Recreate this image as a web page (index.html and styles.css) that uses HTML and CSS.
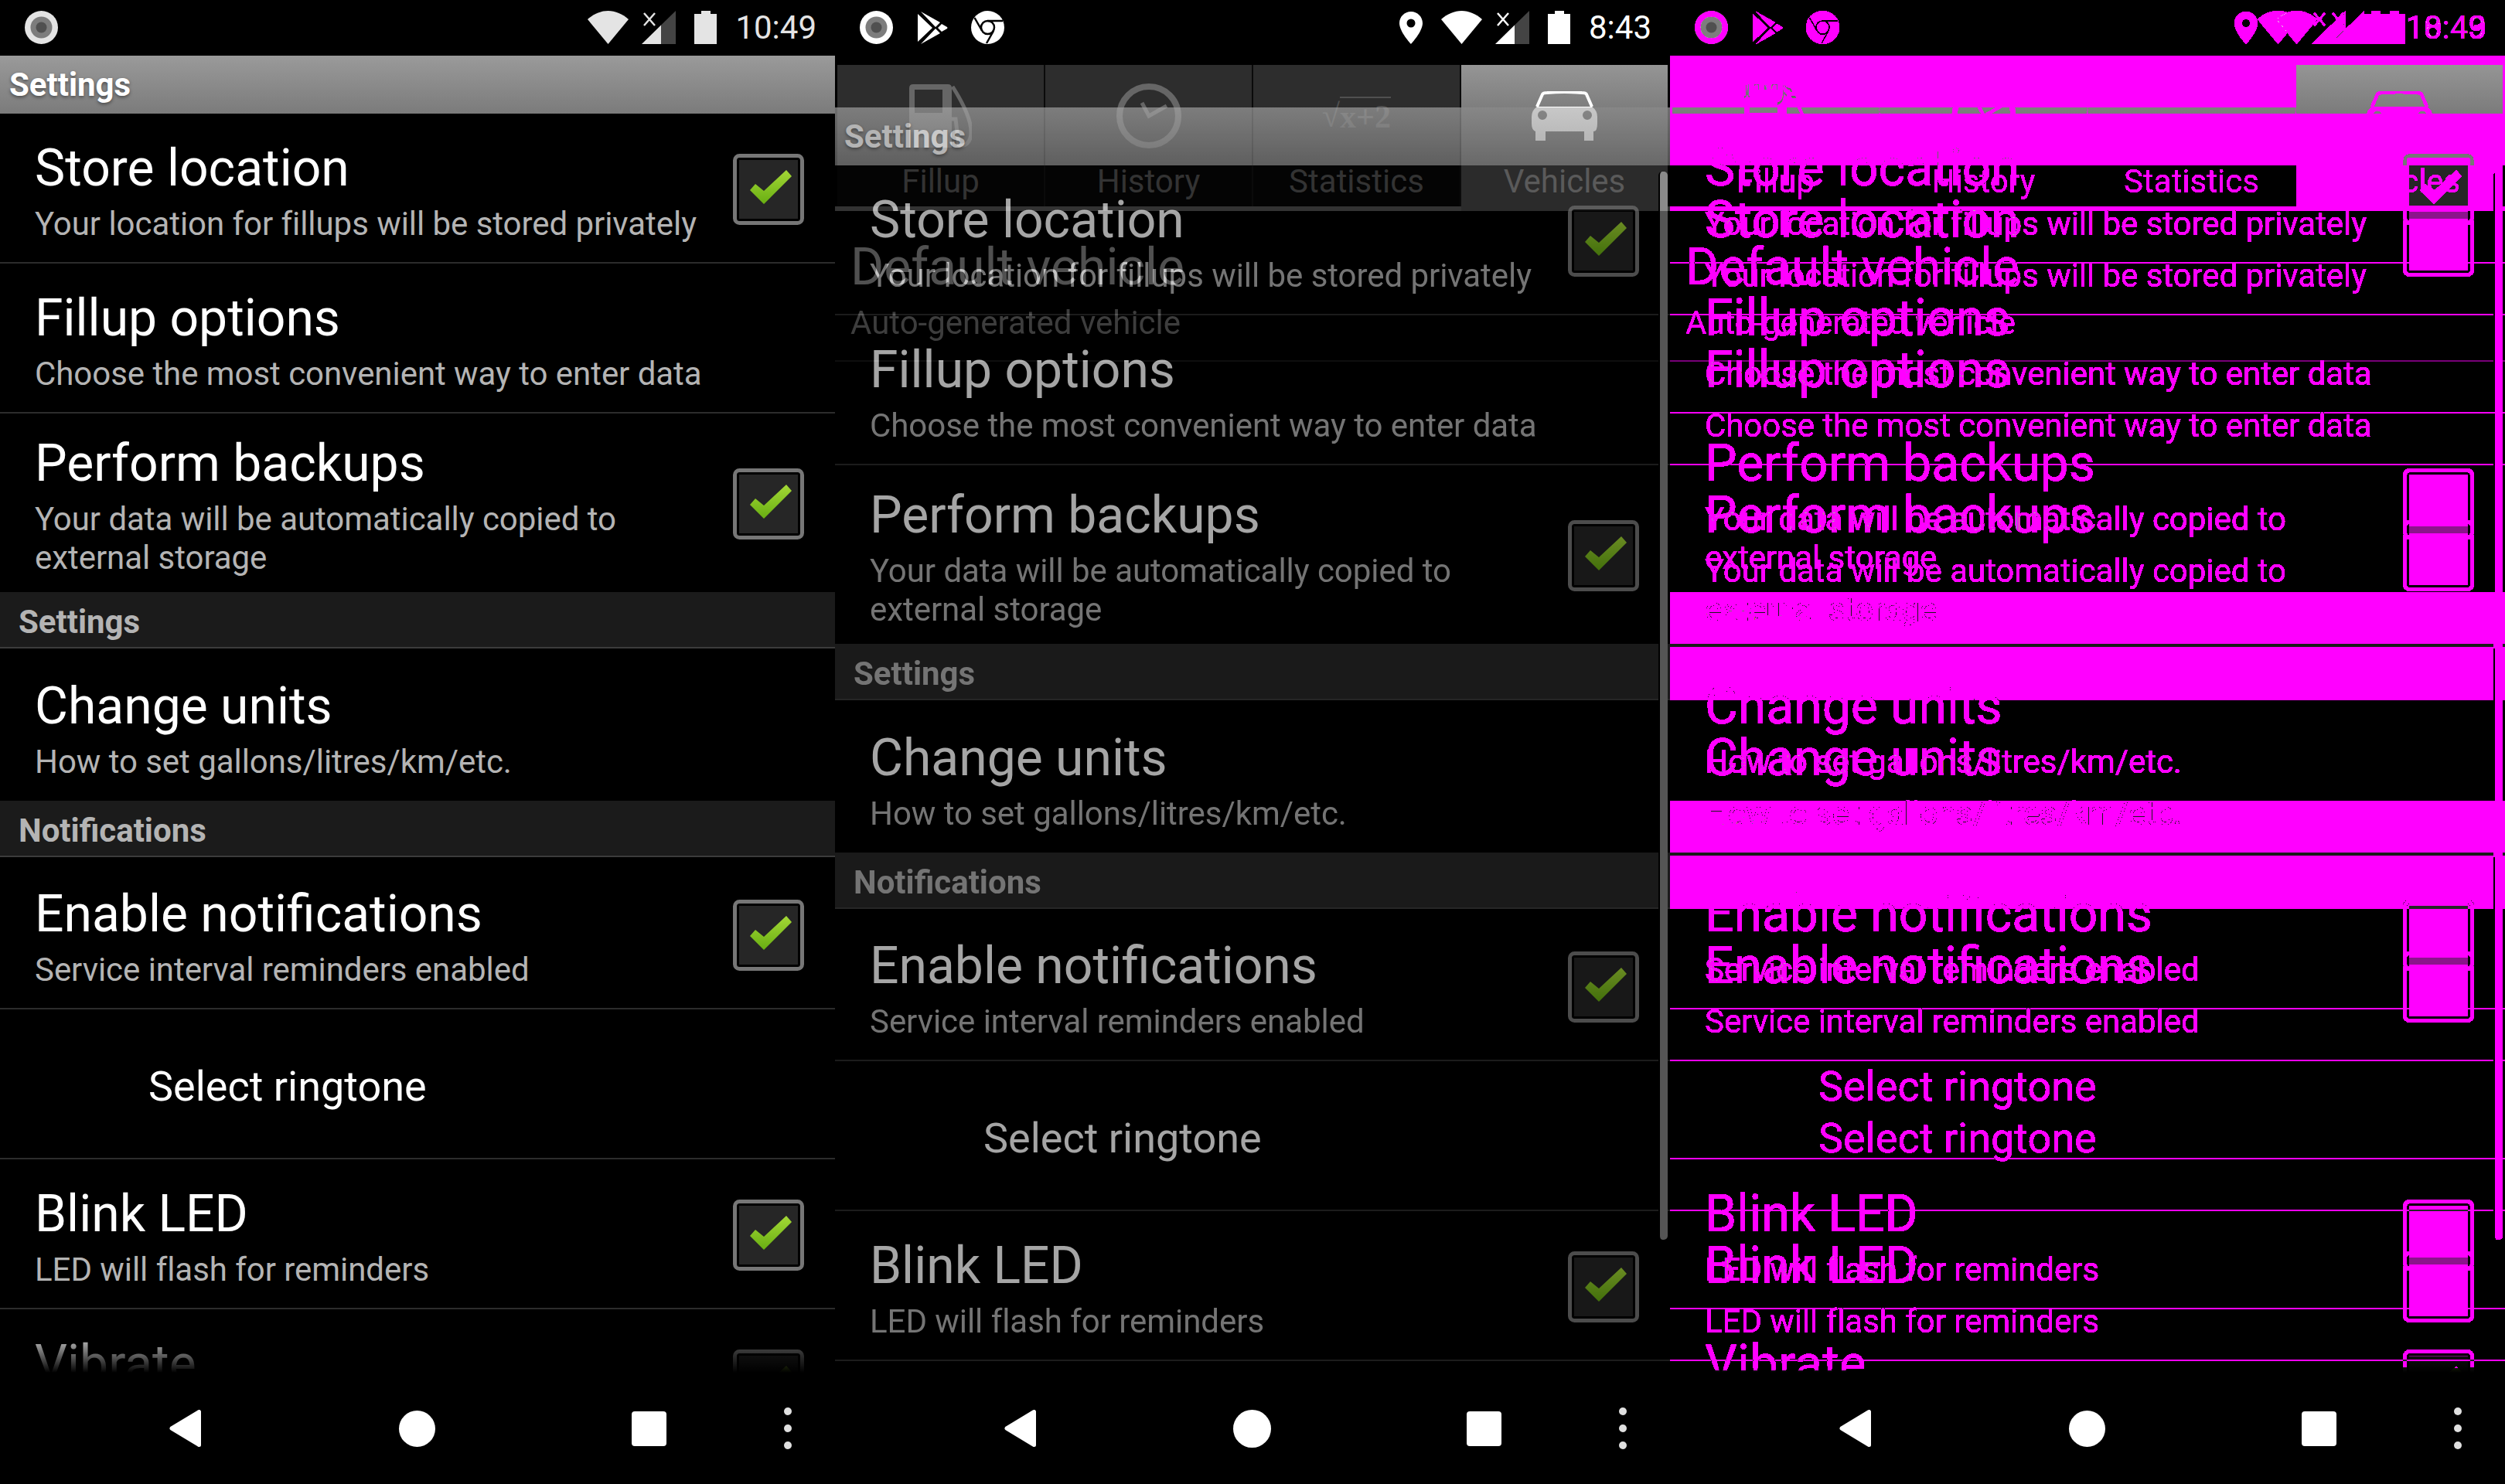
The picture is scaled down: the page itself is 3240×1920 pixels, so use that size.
FILE: index.html
```html
<!DOCTYPE html>
<html lang="en">
<head>
    <meta charset="UTF-8">
    <meta name="viewport" content="width=device-width, initial-scale=1.0">
    <title>Settings transition</title>

    <link rel="stylesheet" href="styles.css">
</head>
<body>

    <!-- Shared icons and the filter used by the third panel -->
    <svg class="defs" width="0" height="0">
        <defs>
            <symbol id="notif" viewBox="0 0 43 43">
                <circle cx="21.5" cy="21.5" r="21.5" fill="currentColor"/>
                <circle cx="21.5" cy="21.5" r="14" fill="#7d7d7d"/>
                <circle cx="21.5" cy="21.5" r="7" fill="#505050"/>
            </symbol>
            <symbol id="play" viewBox="0 0 39 42">
                <path fill="currentColor" d="M0 3V39L19 21Z M4 0L29 14L23 20Z M31 16L38 20Q39 21 38 22L31 26L26 21Z M4 42L29 28L23 22Z"/>
            </symbol>
            <symbol id="chrome" viewBox="0 0 43 43">
                <circle cx="21.5" cy="21.5" r="21.5" fill="currentColor"/>
                <circle cx="21.5" cy="21.5" r="8.5" fill="currentColor" stroke="#000" stroke-width="2.5"/>
                <path fill="none" stroke="#000" stroke-width="2.5" d="M21.5 13H41M14 25.5L4.5 9M29 26L20 42"/>
            </symbol>
            <symbol id="pin" viewBox="0 0 30 42">
                <path fill="currentColor" fill-rule="evenodd" d="M15 0C6.7 0 0 6.7 0 15C0 26 15 42 15 42S30 26 30 15C30 6.7 23.3 0 15 0Z M15 9.5A5.5 5.5 0 1 1 15 20.500A5.5 5.5 0 1 1 15 9.500Z"/>
            </symbol>
            <symbol id="wifi" viewBox="0 0 53 43">
                <path fill="currentColor" d="M26.5 43L0 11C8 4 17 0 26.500 0C36 0 45 4 53 11Z"/>
            </symbol>
            <symbol id="signal" viewBox="0 0 44 43">
                <path fill="currentColor" d="M0 43L25 18.600V43Z"/>
                <path fill="#444" d="M25 43V18.600L44 0V43Z"/>
                <path fill="none" stroke="currentColor" stroke-width="2.5" d="M3 3L17 19M17 3L3 19"/>
            </symbol>
            <symbol id="battery" viewBox="0 0 29 43">
                <path fill="currentColor" d="M9 0H21V4H29V43H0V4H9Z"/>
            </symbol>
            <symbol id="check" viewBox="0 0 92 92">
                <rect x="2.500" y="2.500" width="87" height="87" rx="6" fill="#000" stroke="#767676" stroke-width="5"/>
                <rect x="8" y="8" width="76" height="76" fill="#262626"/>
                <path fill="url(#checkGreen)" d="M22 47L29 39L40 48L69 21L76 29L40 65Z"/>
            </symbol>
            <linearGradient id="checkGreen" x1="0" y1="0" x2="0" y2="1">
                <stop offset="0" stop-color="#a4d836"/>
                <stop offset="1" stop-color="#68ae12"/>
            </linearGradient>
            <!-- Any pixel clearly brighter than black comes out as solid magenta, the rest see-through -->
            <filter id="diffMask" x="0" y="0" width="100%" height="100%" color-interpolation-filters="sRGB">
                <feColorMatrix type="matrix" values="0 0 0 0 1  0 0 0 0 0  0 0 0 0 1  100 100 100 0 -16"/>
            </filter>
        </defs>
    </svg>

    <main class="panels">

        <!-- Panel 1: settings screen at rest -->
        <section class="phone" id="phone-a">
            <div class="screen dim">
                <div class="status">
                    <svg class="i-notif"><use href="#notif"/></svg>
                    <div class="status-right">
                        <svg class="i-wifi"><use href="#wifi"/></svg>
                        <svg class="i-signal"><use href="#signal"/></svg>
                        <svg class="i-battery"><use href="#battery"/></svg>
                        <span class="clock">10:49</span>
                    </div>
                </div>

                <div class="settings">
                    <div class="title-bar">Settings</div>
                    <div class="list">
                        <div class="row">
                            <div class="row-text">
                                <div class="title">Store location</div>
                                <div class="summary">Your location for fillups will be stored privately</div>
                            </div>
                            <svg class="checkbox"><use href="#check"/></svg>
                        </div>
                        <div class="row">
                            <div class="row-text">
                                <div class="title">Fillup options</div>
                                <div class="summary">Choose the most convenient way to enter data</div>
                            </div>
                        </div>
                        <div class="row">
                            <div class="row-text">
                                <div class="title">Perform backups</div>
                                <div class="summary">Your data will be automatically copied to<br>external storage</div>
                            </div>
                            <svg class="checkbox"><use href="#check"/></svg>
                        </div>

                        <div class="section-head">Settings</div>
                        <div class="row">
                            <div class="row-text">
                                <div class="title">Change units</div>
                                <div class="summary">How to set gallons/litres/km/etc.</div>
                            </div>
                        </div>

                        <div class="section-head">Notifications</div>
                        <div class="row">
                            <div class="row-text">
                                <div class="title">Enable notifications</div>
                                <div class="summary">Service interval reminders enabled</div>
                            </div>
                            <svg class="checkbox"><use href="#check"/></svg>
                        </div>
                        <div class="row ringtone">Select ringtone</div>
                        <div class="row">
                            <div class="row-text">
                                <div class="title">Blink LED</div>
                                <div class="summary">LED will flash for reminders</div>
                            </div>
                            <svg class="checkbox"><use href="#check"/></svg>
                        </div>
                        <div class="row">
                            <div class="row-text">
                                <div class="title">Vibrate</div>
                                <div class="summary">Phone will vibrate for reminders</div>
                            </div>
                            <svg class="checkbox"><use href="#check"/></svg>
                        </div>
                    </div>
                </div>

                <div class="nav">
                    <svg class="nav-back" viewBox="0 0 41 48"><polygon points="3,24 38.500,2.500 38.500,45.500"/></svg>
                    <div class="nav-home"></div>
                    <div class="nav-recent"></div>
                    <div class="nav-menu"><span></span><span></span><span></span></div>
                </div>
            </div>
        </section>

        <!-- Panel 2: settings fading in over the vehicles tab -->
        <section class="phone" id="phone-b">
            <div class="screen">
                <div class="status">
                    <svg class="i-notif"><use href="#notif"/></svg>
                    <svg class="i-play"><use href="#play"/></svg>
                    <svg class="i-chrome"><use href="#chrome"/></svg>
                    <div class="status-right">
                        <svg class="i-pin"><use href="#pin"/></svg>
                        <svg class="i-wifi"><use href="#wifi"/></svg>
                        <svg class="i-signal"><use href="#signal"/></svg>
                        <svg class="i-battery"><use href="#battery"/></svg>
                        <span class="clock">8:43</span>
                    </div>
                </div>

                <div class="tab-activity">
                    <div class="tabs">
                        <div class="tab">
                            <div class="tab-icon">
                                <svg class="i-fuel" viewBox="0 0 81 82">
                                    <path fill-rule="evenodd" d="M5 0H50Q55 0 55 5V82H0V5Q0 0 5 0Z M7 7V37H43V7Z"/>
                                    <path class="hose" d="M56 3C70 25 80 45 80 62C80 75 72 82 64 78L60 45H55"/>
                                </svg>
                            </div>
                            <div class="tab-label">Fillup</div>
                        </div>
                        <div class="tab">
                            <div class="tab-icon">
                                <svg class="i-clock" viewBox="0 0 84 84">
                                    <circle cx="42" cy="42" r="38"/>
                                    <polyline points="33,25 42,42 65,29"/>
                                </svg>
                            </div>
                            <div class="tab-label">History</div>
                        </div>
                        <div class="tab">
                            <div class="tab-icon math">√<span>x+2</span></div>
                            <div class="tab-label">Statistics</div>
                        </div>
                        <div class="tab selected">
                            <div class="tab-icon">
                                <svg class="i-car" viewBox="0 0 85 64">
                                    <path class="car-roof" d="M7 20L14 4Q15 2 20 2Q42 0 65 2Q70 2 71 4L78 20"/>
                                    <path fill-rule="evenodd" d="M7 20H78Q85 25 85 33V42Q85 52 80 52V64H68V52H18V64H5V52Q0 50 0 42V33Q0 25 7 20Z M14 25A6 6 0 1 0 14 37A6 6 0 1 0 14 25Z M72 25A6 6 0 1 0 72 37A6 6 0 1 0 72 25Z"/>
                                </svg>
                            </div>
                            <div class="tab-label">Vehicles</div>
                        </div>
                    </div>
                    <div class="vehicle-row">
                        <div class="vehicle-name">Default vehicle</div>
                        <div class="vehicle-desc">Auto-generated vehicle</div>
                    </div>
                </div>

                <!-- settings markup gets copied in here by script.js -->
                <div class="sliding"></div>
                <div class="scrollbar"></div>

                <div class="nav">
                    <svg class="nav-back" viewBox="0 0 41 48"><polygon points="3,24 38.500,2.500 38.500,45.500"/></svg>
                    <div class="nav-home"></div>
                    <div class="nav-recent"></div>
                    <div class="nav-menu"><span></span><span></span><span></span></div>
                </div>
            </div>
        </section>

        <!-- Panel 3: pixel difference of the other two, filled by script.js -->
        <section class="phone" id="phone-c"></section>

    </main>

    <script src="script.js"></script>
</body>
</html>
```

FILE: styles.css
```css
html, body {
    margin: 0;
    background-color: #000;
}

body {
    color: white;
    font-family: Roboto, sans-serif;
}

.defs {
    display: block;
}

.panels {
    display: grid;
    grid-template-columns: repeat(3, 1080px);
    width: 3240px;
    height: 1920px;
}

.phone {
    position: relative;
    width: 1080px;
    height: 1920px;
    overflow: hidden;
}

.screen {
    position: relative;
    display: flex;
    flex-direction: column;
    width: 1080px;
    height: 1920px;
    overflow: hidden;
    background-color: #000;
}

/* Status bar */
.status {
    display: flex;
    align-items: center;
    flex: none;
    box-sizing: border-box;
    height: 72px;
    padding: 0 24px 1px 32px;
    color: #fff;
}

.screen.dim .status {
    color: #e4e4e4;
}

.status-right {
    display: flex;
    align-items: center;
    margin-left: auto;
}

.i-notif {
    width: 43px;
    height: 43px;
}

.i-play {
    width: 39px;
    height: 42px;
    margin-left: 32px;
}

.i-chrome {
    width: 43px;
    height: 43px;
    margin-left: 30px;
}

.i-pin {
    width: 30px;
    height: 42px;
    margin-right: 24px;
}

.i-wifi {
    width: 53px;
    height: 43px;
}

.i-signal {
    width: 44px;
    height: 43px;
    margin-left: 17px;
}

.i-battery {
    width: 29px;
    height: 43px;
    margin-left: 24px;
}

.clock {
    margin-left: 24px;
    font-size: 42px;
    line-height: 49px;
}

/* Settings screen */
.settings {
    display: flex;
    flex-direction: column;
    width: 1080px;
    height: 1704px;
    flex: none;
}

.title-bar {
    flex: none;
    box-sizing: border-box;
    height: 75px;
    padding: 13px 0 0 12px;
    background: linear-gradient(#9a9a9a, #7b7b7b);
    font-size: 42px;
    font-weight: bold;
    line-height: 49px;
    text-shadow: 0 2px 4px rgba(0, 0, 0, 0.45);
}

.list {
    position: relative;
    height: 1629px;
    flex: none;
    overflow: hidden;
}

/* fading edge above the nav bar */
.list::after {
    content: "";
    position: absolute;
    left: 0;
    right: 0;
    bottom: 0;
    height: 60px;
    background: linear-gradient(rgba(0, 0, 0, 0), #000);
}

.row {
    display: flex;
    align-items: center;
    box-sizing: border-box;
    min-height: 194px;
    padding: 26px 40px 19px 45px;
    border-bottom: 2px solid #2c2c2c;
}

.row:has(+ .section-head) {
    border-bottom: none;
}

.section-head + .row {
    min-height: 197px;
    padding-top: 29px;
}

.row-text {
    flex: 1;
}

.title {
    font-size: 66px;
    line-height: 77px;
}

.summary {
    margin-top: 9px;
    color: #b4b4b4;
    font-size: 42px;
    line-height: 50px;
    letter-spacing: -0.05px;
}

.ringtone {
    padding-left: 192px;
    font-size: 54px;
    line-height: 63px;
}

.checkbox {
    flex: none;
    width: 92px;
    height: 92px;
    margin-bottom: 4px;
}

.section-head {
    box-sizing: border-box;
    height: 73px;
    padding: 14px 0 0 24px;
    background-color: #1b1b1b;
    border-bottom: 2px solid #3c3c3c;
    color: #b4b4b4;
    font-size: 42px;
    font-weight: bold;
    line-height: 49px;
}

/* Nav bar */
.nav {
    position: absolute;
    left: 0;
    right: 0;
    bottom: 0;
    z-index: 3;
    display: flex;
    align-items: center;
    box-sizing: border-box;
    height: 144px;
    padding-left: 219px;
    background-color: #000;
}

.nav-back {
    width: 41px;
    height: 48px;
    fill: #fff;
    stroke: #fff;
    stroke-width: 5;
    stroke-linejoin: round;
}

.nav-home {
    width: 47px;
    height: 47px;
    margin-left: 256px;
    border-radius: 50%;
    background-color: #fff;
}

#phone-b .nav-home {
    box-shadow: 0 0 0 1px #fff;
}

.nav-recent {
    width: 45px;
    height: 45px;
    margin-left: 254px;
    border-radius: 4px;
    background-color: #fff;
}

.nav-menu {
    display: flex;
    flex-direction: column;
    gap: 12px;
    margin-left: 152px;
}

.nav-menu span {
    width: 10px;
    height: 10px;
    border-radius: 50%;
    background-color: #e0e0e0;
}

/* Tab activity behind the transition */
.tab-activity {
    flex: none;
    padding-top: 12px;
}

.tabs {
    display: flex;
    height: 189px;
    padding: 0 3px;
    background: linear-gradient(#000 183px, #333 183px);
}

.tab {
    display: flex;
    flex-direction: column;
    align-items: center;
    flex: 1;
    box-sizing: border-box;
    height: 183px;
    padding-top: 24px;
    border-right: 2px solid #0a0a0a;
    background: linear-gradient(#2d2d2d 130px, #040404 130px);
    color: #333;
}

.tab.selected {
    height: 189px;
    border-right: none;
    background: linear-gradient(#959595, #7e7e7e 55px, #484848 55px, #484848 130px, #2b2b2b 130px);
    color: #5a5a5a;
}

.tab-icon {
    display: flex;
    align-items: center;
    justify-content: center;
    height: 84px;
}

.tab-label {
    margin-top: 18px;
    font-size: 42px;
    line-height: 49px;
}

.i-fuel {
    width: 81px;
    height: 82px;
    fill: #666;
}

.hose {
    fill: none;
    stroke: #666;
    stroke-width: 5;
}

.i-clock {
    width: 84px;
    height: 84px;
    fill: none;
    stroke: #666;
    stroke-width: 8;
}

.i-clock polyline {
    stroke-width: 5;
}

.math {
    color: #505050;
    font-family: "Liberation Serif", serif;
    font-size: 42px;
    font-weight: bold;
}

.math span {
    border-top: 2px solid #505050;
}

.i-car {
    width: 85px;
    height: 64px;
    fill: #fff;
}

.car-roof {
    fill: none;
    stroke: #fff;
    stroke-width: 4;
}

.vehicle-row {
    position: relative;
    z-index: 2;
    box-sizing: border-box;
    height: 195px;
    padding: 34px 0 0 20px;
    border-bottom: 2px solid #0e0e0e;
    mix-blend-mode: plus-lighter;
}

.vehicle-name {
    color: #505050;
    font-size: 66px;
    line-height: 77px;
}

.vehicle-desc {
    margin-top: 9px;
    color: #3d3d3d;
    font-size: 42px;
    line-height: 50px;
}

/* Settings screen on its way in, 67px below its resting place */
.sliding {
    position: absolute;
    left: 0;
    top: 139px;
    z-index: 1;
    opacity: 0.65;
}

.sliding .title-bar {
    background: linear-gradient(#aaaaaa, #7c7c7c);
}

.sliding .section-head {
    background-color: #292929;
}

.scrollbar {
    position: absolute;
    left: 1065px;
    top: 222px;
    z-index: 2;
    width: 10px;
    height: 1382px;
    border-left: 2px solid #000;
    border-radius: 5px;
    background: linear-gradient(#8a8a8a 51px, #555 51px);
}

/* Panel 3 */
.diff-mask {
    position: absolute;
    inset: 0;
    isolation: isolate;
    filter: url(#diffMask);
}

.diff-mask .screen + .screen {
    position: absolute;
    left: 0;
    top: 0;
    mix-blend-mode: difference;
}
```

FILE: script.js
```js
const phoneA = document.querySelector('#phone-a .screen');
const phoneB = document.querySelector('#phone-b .screen');
const phoneC = document.getElementById('phone-c');

// Panel 2 shows the same settings screen as panel 1
const sliding = phoneB.querySelector('.sliding');
sliding.appendChild(phoneA.querySelector('.settings').cloneNode(true));

// Panel 3: panel 1 below, magenta wherever panels 1 and 2 disagree on top
const mask = document.createElement('div');
mask.className = 'diff-mask';
mask.appendChild(phoneA.cloneNode(true));
mask.appendChild(phoneB.cloneNode(true));

phoneC.appendChild(phoneA.cloneNode(true));
phoneC.appendChild(mask);
```
